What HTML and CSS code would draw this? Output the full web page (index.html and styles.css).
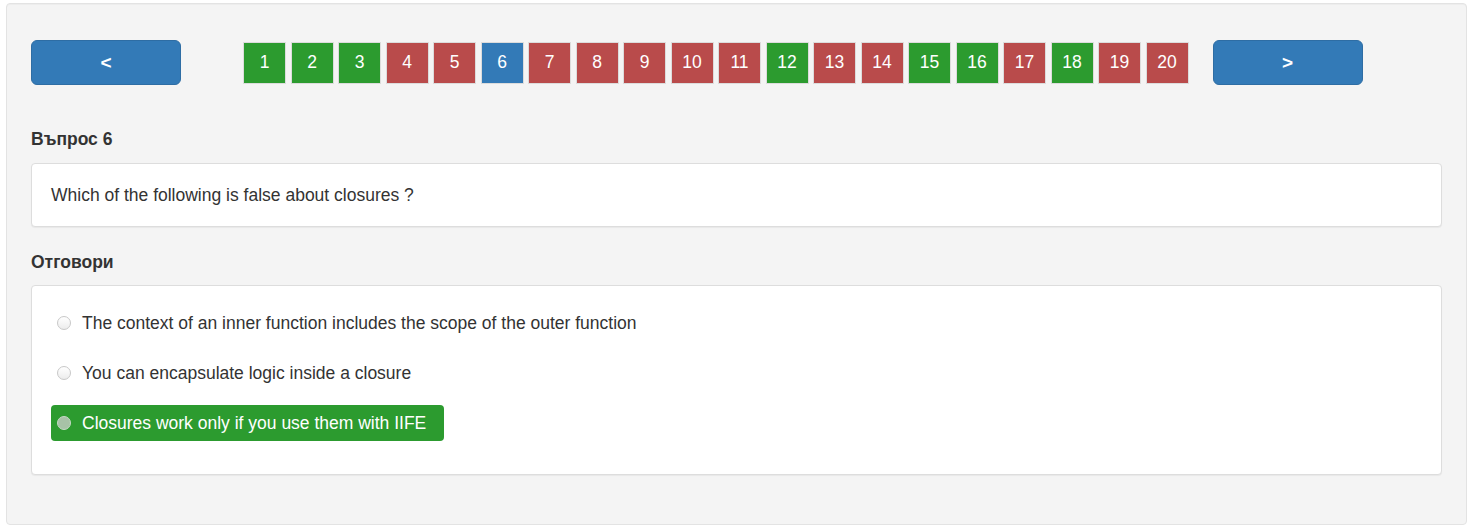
FILE: index.html
```html
<!DOCTYPE html>
<html>
<head>
<meta charset="utf-8">
<link rel="stylesheet" href="styles.css">
</head>
<body>
<div class="well">
  <div class="nav-row">
    <button class="nav-btn prev">&lt;</button>
    <div class="pages">
      <span class="pg ok">1</span>
      <span class="pg ok">2</span>
      <span class="pg ok">3</span>
      <span class="pg bad">4</span>
      <span class="pg bad">5</span>
      <span class="pg cur">6</span>
      <span class="pg bad">7</span>
      <span class="pg bad">8</span>
      <span class="pg bad">9</span>
      <span class="pg bad">10</span>
      <span class="pg bad">11</span>
      <span class="pg ok">12</span>
      <span class="pg bad">13</span>
      <span class="pg bad">14</span>
      <span class="pg ok">15</span>
      <span class="pg ok">16</span>
      <span class="pg bad">17</span>
      <span class="pg ok">18</span>
      <span class="pg bad">19</span>
      <span class="pg bad">20</span>
    </div>
    <button class="nav-btn next">&gt;</button>
  </div>

  <h4 class="section-title q-title">Въпрос 6</h4>
  <div class="panel question">Which of the following is false about closures ?</div>

  <h4 class="section-title">Отговори</h4>
  <div class="panel answers">
    <label class="answer"><span class="radio"></span>The context of an inner function includes the scope of the outer function</label>
    <label class="answer"><span class="radio"></span>You can encapsulate logic inside a closure</label>
    <label class="answer selected"><span class="radio"></span>Closures work only if you use them with IIFE</label>
  </div>
</div>
</body>
</html>
```

FILE: styles.css
```css
* { box-sizing: border-box; }
html, body {
  margin: 0;
  padding: 0;
  background: #fff;
  font-family: "Liberation Sans", Arial, Helvetica, sans-serif;
  color: #333;
  font-size: 17.5px;
}
.well {
  margin: 3px 6px 0 6px;
  height: 522px;
  background: #f4f4f4;
  border: 1px solid #e3e3e3;
  border-radius: 4px;
  padding: 36px 24px 0 24px;
  box-shadow: inset 0 1px 1px rgba(0,0,0,0.03);
}
.nav-row {
  display: flex;
  align-items: center;
  height: 45px;
}
.nav-btn {
  width: 150px;
  height: 45px;
  background: #337ab7;
  border: 1px solid #2e6da4;
  border-radius: 6px;
  color: #fff;
  font-family: "Liberation Sans", Arial, sans-serif;
  font-size: 19px;
  font-weight: bold;
  padding: 0;
  cursor: pointer;
}
.pages {
  display: flex;
  gap: 4.5px;
  margin-left: 62px;
  margin-right: 24px;
}
.pg {
  width: 43px;
  height: 42px;
  display: flex;
  align-items: center;
  justify-content: center;
  border: 1px solid #dcdcdc;
  color: #fff;
  font-size: 17.5px;
}
.pg.ok { background: #2c9b2f; }
.pg.bad { background: #b94b4b; }
.pg.cur { background: #337ab7; }

.section-title {
  margin: 0;
  font-size: 17.5px;
  font-weight: bold;
  line-height: 20px;
  color: #333;
}
.q-title { margin-top: 44px; }
.panel {
  background: #fff;
  border: 1px solid #ddd;
  border-radius: 4px;
  box-shadow: 0 1px 1px rgba(0,0,0,0.05);
}
.question {
  margin-top: 14px;
  margin-bottom: 25px;
  padding: 20px 19px;
  line-height: 22px;
}
.answers {
  margin-top: 13px;
  padding: 19px 19px 33px 19px;
  display: flex;
  flex-direction: column;
  align-items: flex-start;
  gap: 14px;
}
.answer {
  display: flex;
  align-items: center;
  height: 36px;
  padding: 0 18px 0 6px;
  border-radius: 4px;
  line-height: 20px;
  color: #333;
}
.radio {
  width: 14px;
  height: 14px;
  border-radius: 50%;
  border: 1px solid #c8c8c8;
  background: linear-gradient(#fff, #ececec);
  margin-right: 11px;
  flex: none;
}
.answer.selected {
  background: #2c9b2f;
  color: #fff;
}
.answer.selected .radio {
  background: #a7c2a7;
  border: 1px solid #c5d9c5;
}
```
